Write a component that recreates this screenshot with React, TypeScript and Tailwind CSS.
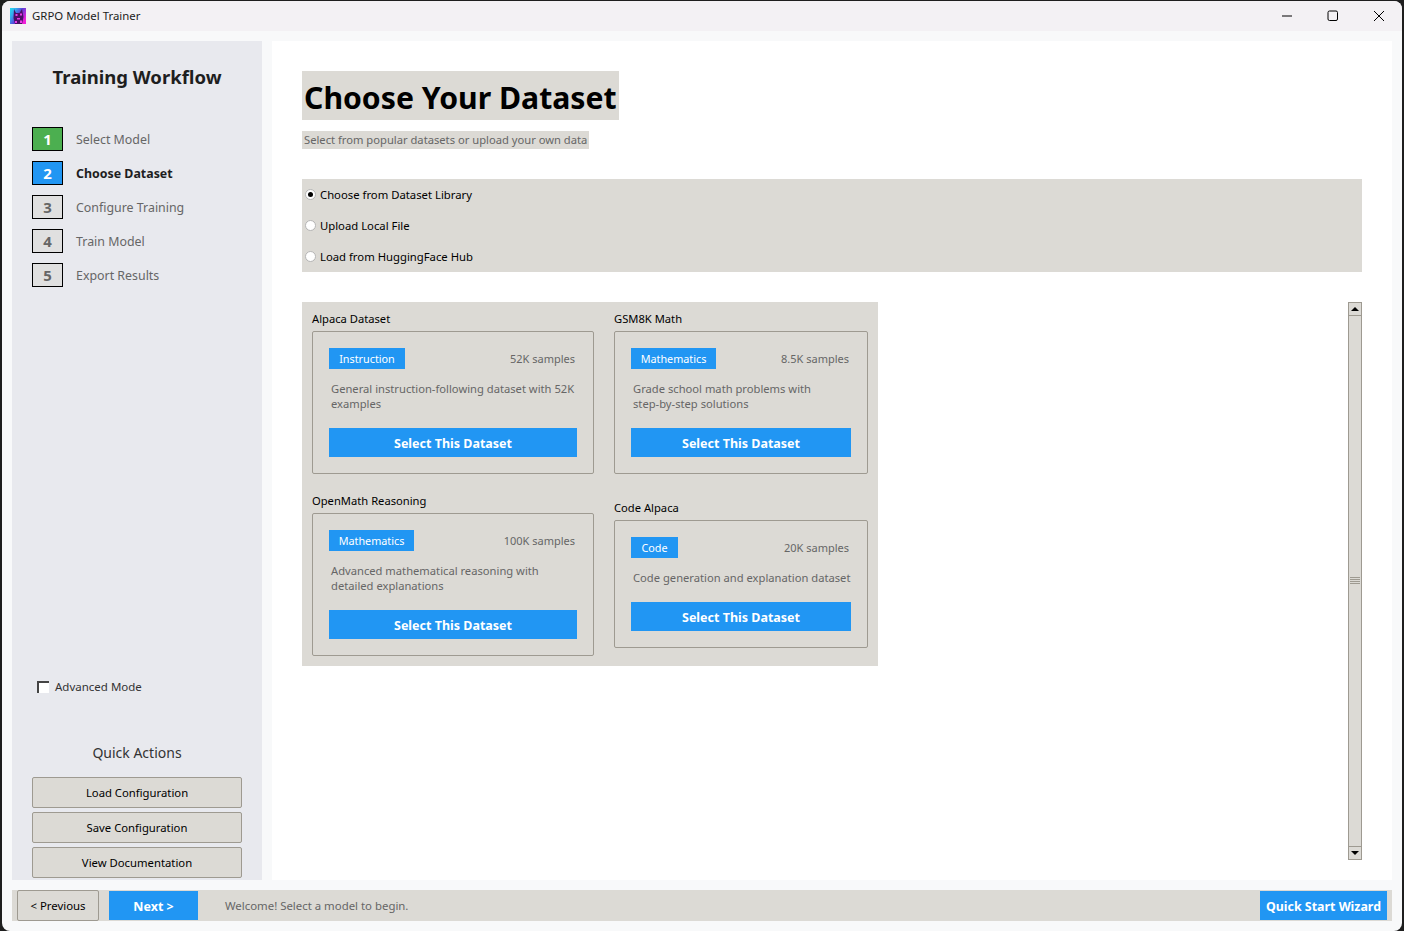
import React from 'react';

const steps = [
  { n: 1, label: 'Select Model', box: 'bg-[#4caf50] text-white', text: 'text-[#666666]' },
  { n: 2, label: 'Choose Dataset', box: 'bg-[#2196f3] text-white', text: 'font-bold text-[#1e1e1e]' },
  { n: 3, label: 'Configure Training', box: 'bg-[#e0e0e0] text-[#666666]', text: 'text-[#666666]' },
  { n: 4, label: 'Train Model', box: 'bg-[#e0e0e0] text-[#666666]', text: 'text-[#666666]' },
  { n: 5, label: 'Export Results', box: 'bg-[#e0e0e0] text-[#666666]', text: 'text-[#666666]' },
];

const Logo = () => (
  <svg width="16" height="16" viewBox="0 0 16 16" className="shrink-0">
    <defs>
      <linearGradient id="logo-bg" x1="0" y1="0" x2="1" y2="0.6">
        <stop offset="0" stopColor="#1fe0f0" />
        <stop offset="0.3" stopColor="#35a8ee" />
        <stop offset="0.6" stopColor="#5a3fd8" />
        <stop offset="1" stopColor="#f020d8" />
      </linearGradient>
    </defs>
    <rect width="16" height="16" fill="url(#logo-bg)" />
    <path d="M4 1l2 4h3.5L12 1l1.5 8L12 16H5L3.5 10z" fill="#4a0f66" />
    <path d="M5.5 6h2v2h-2zM10 5.5h2v2h-2zM7 10h3v1.5H7zM5 13h2v2H5zM10 12.5h2v2.5h-2z" fill="#e83ce8" />
  </svg>
);

type CardProps = {
  title: string;
  tag: string;
  samples: string;
  desc: string[];
  tagWidth: string;
  width: string;
  buttonWidth: string;
};

const DatasetCard = ({ title, tag, samples, desc, tagWidth, width, buttonWidth }: CardProps) => (
  <div className={`flex flex-col ${width}`}>
    <div className="h-[17px] text-[11.2px] leading-[14px] text-black">{title}</div>
    <div className="mt-[2px] flex flex-col rounded-[2px] border border-[#9e9a91] px-[16px] pt-[16px] pb-[16px]">
      <div className="flex h-[21px] items-center justify-between pr-[2px]">
        <span className={`flex h-[21px] items-center justify-center bg-[#2196f3] pt-[1px] text-[10.8px] text-white ${tagWidth}`}>
          {tag}
        </span>
        <span className="pt-[1px] text-[11px] text-[#666666]">{samples}</span>
      </div>
      <div className={`mt-[12px] px-[2px] text-[11.2px] leading-[15px] text-[#666666] ${desc.length > 1 ? 'h-[30px]' : 'h-[15px]'}`}>
        {desc.map((line) => (
          <div key={line} className="whitespace-nowrap">{line}</div>
        ))}
      </div>
      <button className={`mt-[17px] h-[29px] bg-[#2196f3] pt-[3px] text-[12.5px] font-bold text-white ${buttonWidth}`}>
        Select This Dataset
      </button>
    </div>
  </div>
);

const QuickButton = ({ label }: { label: string }) => (
  <button className="h-[31px] w-[210px] rounded-[2px] border border-[#9e9a91] bg-[#dcdad5] pt-[1px] text-[11.3px] text-black">
    {label}
  </button>
);

const Radio = ({ label, checked }: { label: string; checked?: boolean }) => (
  <div className="flex h-[31px] items-center text-[11.3px] text-black">
    <span className="ml-[3px] flex h-[11px] w-[11px] items-center justify-center rounded-full border border-[#b5b5b5] bg-white">
      {checked && <span className="h-[5px] w-[5px] rounded-full bg-black" />}
    </span>
    <span className="ml-[4px] pt-[1px]">{label}</span>
  </div>
);

const Scrollbar = () => (
  <div className="flex h-[558px] w-[14px] shrink-0 flex-col">
    <div className="flex h-[14px] items-center justify-center border border-[#9e9a91] bg-[#dcdad5]">
      <span className="h-0 w-0 border-x-[4px] border-b-[4px] border-x-transparent border-b-black" />
    </div>
    <div className="flex flex-1 items-center justify-center border-x border-[#9e9a91] bg-[#dcdad5]">
      <div className="mb-[2px] flex w-[10px] flex-col gap-[1px]">
        <span className="h-[1px] bg-[#9e9a91]" />
        <span className="h-[1px] bg-[#9e9a91]" />
        <span className="h-[1px] bg-[#9e9a91]" />
        <span className="h-[1px] bg-[#9e9a91]" />
      </div>
    </div>
    <div className="flex h-[14px] items-center justify-center border border-[#9e9a91] bg-[#dcdad5]">
      <span className="h-0 w-0 border-x-[4px] border-t-[4px] border-x-transparent border-t-black" />
    </div>
  </div>
);

export default function App() {
  return (
    <div
      className="h-[931px] w-[1404px] overflow-hidden bg-[#1e1e1e] px-[2px] pt-[1px]"
      style={{ fontFamily: '"Noto Sans", "Open Sans", sans-serif' }}
    >
      <div className="flex h-[930px] flex-col overflow-hidden rounded-[8px] bg-[#f8f9fa]">

        {/* Title bar */}
        <div className="flex h-[30px] shrink-0 items-center bg-[#f3f1f4] pl-[8px]">
          <Logo />
          <span className="ml-[6px] text-[11.4px] text-[#1c1c1c]">GRPO Model Trainer</span>
          <div className="ml-auto flex items-center text-black">
            <svg width="46" height="30" viewBox="0 0 46 30">
              <path d="M18 15h10" stroke="currentColor" strokeWidth="1" />
            </svg>
            <svg width="46" height="30" viewBox="0 0 46 30">
              <rect x="18" y="10" width="9.5" height="9.5" rx="1.5" fill="none" stroke="currentColor" strokeWidth="1" />
            </svg>
            <svg width="46" height="30" viewBox="0 0 46 30">
              <path d="M18 10l10 10M28 10l-10 10" stroke="currentColor" strokeWidth="1" />
            </svg>
          </div>
        </div>

        <div className="flex flex-1 gap-[10px] px-[10px] pt-[10px]">

          {/* Sidebar */}
          <aside className="flex h-[839px] w-[250px] shrink-0 flex-col bg-[#e8e9ee] px-[20px]">
            <h2 className="mt-[22px] text-center text-[18.5px] leading-[28px] font-bold whitespace-nowrap text-[#1e1e1e]">
              Training Workflow
            </h2>
            <div className="mt-[36px] flex flex-col gap-[10px]">
              {steps.map((step) => (
                <div key={step.n} className="flex h-[24px] items-center">
                  <span className={`flex h-[24px] w-[31px] items-center justify-center border border-black text-[15px] font-bold ${step.box}`}>
                    {step.n}
                  </span>
                  <span className={`ml-[13px] pt-[2px] text-[12.4px] ${step.text}`}>{step.label}</span>
                </div>
              ))}
            </div>
            <div className="mt-[391px] flex h-[18px] items-center pl-[5px] text-[11.5px] text-[#333333]">
              <span className="h-[12px] w-[12px] border-t-2 border-l-2 border-[#444444] bg-white" />
              <span className="ml-[6px]">Advanced Mode</span>
            </div>
            <div className="mt-[45px] text-center text-[14px] leading-[24px] text-[#333333]">Quick Actions</div>
            <div className="mt-[12px] flex flex-col gap-[4px]">
              <QuickButton label="Load Configuration" />
              <QuickButton label="Save Configuration" />
              <QuickButton label="View Documentation" />
            </div>
          </aside>

          {/* Main content */}
          <main className="flex h-[839px] flex-1 flex-col bg-white px-[30px] pt-[30px]">
            <div className="flex h-[49px] w-fit items-center bg-[#dcdad5] px-[2px] pt-[6px]">
              <h1 className="text-[30.2px] leading-none font-bold whitespace-nowrap text-black">Choose Your Dataset</h1>
            </div>
            <div className="mt-[11px] flex h-[18px] w-fit items-center bg-[#dcdad5] px-[2px] text-[11.2px] text-[#666666]">
              Select from popular datasets or upload your own data
            </div>
            <div className="mt-[30px] h-[93px] bg-[#dcdad5]">
              <Radio label="Choose from Dataset Library" checked />
              <Radio label="Upload Local File" />
              <Radio label="Load from HuggingFace Hub" />
            </div>
            <div className="mt-[30px] flex justify-between">
              <div className="grid h-[364px] w-[576px] grid-cols-[282px_254px] gap-x-[20px] bg-[#dcdad5] p-[10px]">
                <div>
                  <DatasetCard
                    title="Alpaca Dataset"
                    tag="Instruction"
                    samples="52K samples"
                    desc={['General instruction-following dataset with 52K', 'examples']}
                    tagWidth="w-[76px]"
                    width="w-[282px]"
                    buttonWidth="w-[248px]"
                  />
                  <div className="mt-[20px]">
                    <DatasetCard
                      title="OpenMath Reasoning"
                      tag="Mathematics"
                      samples="100K samples"
                      desc={['Advanced mathematical reasoning with', 'detailed explanations']}
                      tagWidth="w-[85px]"
                      width="w-[282px]"
                      buttonWidth="w-[248px]"
                    />
                  </div>
                </div>
                <div>
                  <DatasetCard
                    title="GSM8K Math"
                    tag="Mathematics"
                    samples="8.5K samples"
                    desc={['Grade school math problems with', 'step-by-step solutions']}
                    tagWidth="w-[85px]"
                    width="w-[254px]"
                    buttonWidth="w-[220px]"
                  />
                  <div className="mt-[27px]">
                    <DatasetCard
                      title="Code Alpaca"
                      tag="Code"
                      samples="20K samples"
                      desc={['Code generation and explanation dataset']}
                      tagWidth="w-[47px]"
                      width="w-[254px]"
                      buttonWidth="w-[220px]"
                    />
                  </div>
                </div>
              </div>
              <Scrollbar />
            </div>
          </main>
        </div>

        {/* Bottom bar */}
        <div className="mx-[10px] mb-[10px] flex h-[31px] shrink-0 items-center bg-[#dcdad5] pl-[5px] pr-[5px]">
          <button className="h-[31px] w-[82px] rounded-[2px] border border-[#9e9a91] bg-[#dcdad5] text-[11.4px] text-black">
            &lt; Previous
          </button>
          <button className="ml-[10px] h-[29px] w-[89px] bg-[#2196f3] pt-[3px] text-[12.5px] font-bold text-white">Next &gt;</button>
          <span className="ml-[27px] text-[11.4px] text-[#666666]">Welcome! Select a model to begin.</span>
          <button className="ml-auto h-[29px] w-[127px] bg-[#2196f3] pt-[3px] text-[12.4px] font-bold whitespace-nowrap text-white">
            Quick Start Wizard
          </button>
        </div>
      </div>
    </div>
  );
}
